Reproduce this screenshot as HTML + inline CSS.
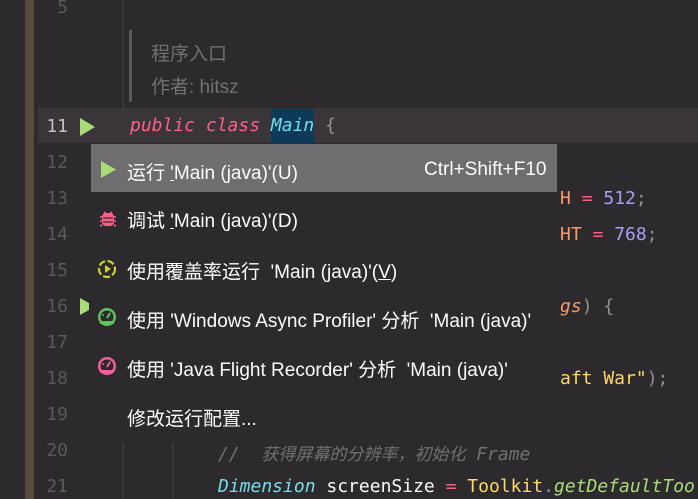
<!DOCTYPE html>
<html><head><meta charset="utf-8"><style>
body{margin:0;width:698px;height:499px;overflow:hidden;background:#2d2a2e;position:relative;font-family:"Liberation Sans","Noto Sans CJK SC",sans-serif}
.a{position:absolute}
.ln{position:absolute;left:38px;width:30px;text-align:right;color:#5b595c;font:18px "DejaVu Sans Mono","Liberation Mono",monospace}
.code{position:absolute;font:18px "DejaVu Sans Mono","Liberation Mono",monospace;white-space:pre}
.mi{position:absolute;left:127px;color:#fcfcfa;font-size:19px;white-space:pre}
</style></head><body>
<div class="a" style="left:0;top:0;width:25px;height:499px;background:#2b292c"></div>
<div class="a" style="left:25px;top:0;width:9px;height:499px;background:#594c3b"></div>
<div class="a" style="left:122px;top:0;width:2px;height:110px;background:#3a383b"></div>
<div class="a" style="left:38px;top:108px;width:660px;height:35px;background:#3a3538"></div>
<div class="a" style="left:129px;top:30px;width:3px;height:72px;background:#5b595c"></div>
<div class="a" style="left:151px;top:39px;color:#727072;font-size:19px">程序入口</div>
<div class="a" style="left:151px;top:72px;color:#727072;font-size:19px">作者: hitsz</div>
<div class="ln" style="top:-3px">5</div>
<div class="ln" style="top:116px;color:#c1c0c0">11</div>
<div class="ln" style="top:152px">12</div>
<div class="ln" style="top:188px">13</div>
<div class="ln" style="top:224px">14</div>
<div class="ln" style="top:260px">15</div>
<div class="ln" style="top:296px">16</div>
<div class="ln" style="top:332px">17</div>
<div class="ln" style="top:368px">18</div>
<div class="ln" style="top:404px">19</div>
<div class="ln" style="top:440px">20</div>
<div class="ln" style="top:476px">21</div>
<svg class="a" style="left:80px;top:118px" width="16" height="18"><polygon points="0,0 15,9 0,18" fill="#a9dc76"/></svg>
<svg class="a" style="left:80px;top:298px" width="10" height="18"><polygon points="0,0 9,5 9,12 0,17" fill="#a9dc76"/></svg>
<div class="code" style="left:130px;top:115px"><i style="color:#ff6188">public class</i> <span style="background:#0d3a58;color:#78dce8;font-style:italic;padding:6px 0 8px">Main</span> <span style="color:#939293">{</span></div>
<div class="code" style="left:560px;top:188px"><span style="color:#fc9867">H</span> <span style="color:#ff6188">=</span> <span style="color:#ab9df2">512</span><span style="color:#939293">;</span></div>
<div class="code" style="left:560px;top:224px"><span style="color:#fc9867">HT</span> <span style="color:#ff6188">=</span> <span style="color:#ab9df2">768</span><span style="color:#939293">;</span></div>
<div class="code" style="left:560px;top:296px"><i style="color:#fc9867">gs</i><span style="color:#939293">) {</span></div>
<div class="code" style="left:560px;top:368px"><span style="color:#ffd866">aft War"</span><span style="color:#939293">);</span></div>
<div class="a" style="left:122px;top:444px;width:2px;height:55px;background:#3a383b"></div>
<div class="a" style="left:172px;top:444px;width:2px;height:55px;background:#3a383b"></div>
<div class="code" style="left:218px;top:440px;color:#727072;font-style:italic">//  <span style="font-family:'Noto Sans CJK SC';font-size:17px">获得屏幕的分辨率，初始化</span> Frame</div>
<div class="a" style="left:218px;top:470px;width:480px;height:29px;overflow:hidden"><div class="code" style="left:0;top:6px"><i style="color:#78dce8">Dimension</i><span style="color:#fcfcfa"> screenSize </span><span style="color:#ff6188">=</span> <span style="color:#ffd866">Toolkit</span><span style="color:#939293">.</span><i style="color:#a9dc76">getDefaultToo</i></div></div>
<div class="a" style="left:91px;top:143px;width:466px;height:297px;background:#2d2a2e"></div>
<div class="a" style="left:91px;top:144px;width:466px;height:48px;background:#6f6d70"></div>
<svg class="a" style="left:101px;top:161px" width="16" height="18"><polygon points="0,0 15,8.5 0,17" fill="#a9dc76"/></svg>
<div class="mi" style="top:158px">运行 <u>'</u>Main (java)'(U)</div>
<div class="a" style="left:424px;top:159px;color:#fcfcfa;font-size:19px">Ctrl+Shift+F10</div>
<svg class="a" style="left:99px;top:209px" width="18" height="18"><rect x="3" y="4" width="12" height="13" rx="4" fill="#ff6188"/><path d="M5 3l2 2M13 3l-2 2M1 8h16M1 12h16M3 16l-2 1M15 16l2 1" stroke="#ff6188" stroke-width="1.6"/><path d="M4 9h10M4 13h10" stroke="#2d2a2e" stroke-width="1.2"/></svg>
<div class="mi" style="top:206px">调试 <u>'</u>Main (java)'(D)</div>
<svg class="a" style="left:97px;top:259px" width="20" height="20"><circle cx="10" cy="10" r="8" fill="none" stroke="#c9d02f" stroke-width="2.2" stroke-dasharray="7 2.5"/><polygon points="8,6 14,10 8,14" fill="#c9d02f"/></svg>
<div class="mi" style="top:257px">使用覆盖率运行 &nbsp;'Main (java)'(<u>V</u>)</div>
<svg class="a" style="left:97px;top:307px" width="20" height="20"><circle cx="10" cy="10" r="9" fill="#5ec15e"/><circle cx="10" cy="10" r="6.5" fill="#2d2a2e"/><path d="M3 14h14v3H3z" fill="#5ec15e"/><path d="M10 11l3-5" stroke="#5ec15e" stroke-width="2"/><circle cx="6" cy="8" r="1" fill="#5ec15e"/></svg>
<div class="mi" style="top:306px">使用 'Windows Async Profiler' 分析 &nbsp;'Main (java)'</div>
<svg class="a" style="left:97px;top:356px" width="20" height="20"><circle cx="10" cy="10" r="9" fill="#f0609a"/><circle cx="10" cy="10" r="6.5" fill="#2d2a2e"/><path d="M3 14h14v3H3z" fill="#f0609a"/><path d="M10 11l3-5" stroke="#f0609a" stroke-width="2"/><circle cx="6" cy="8" r="1" fill="#f0609a"/></svg>
<div class="mi" style="top:355px">使用 'Java Flight Recorder' 分析 &nbsp;'Main (java)'</div>
<div class="mi" style="top:404px">修改运行配置...</div>
</body></html>
